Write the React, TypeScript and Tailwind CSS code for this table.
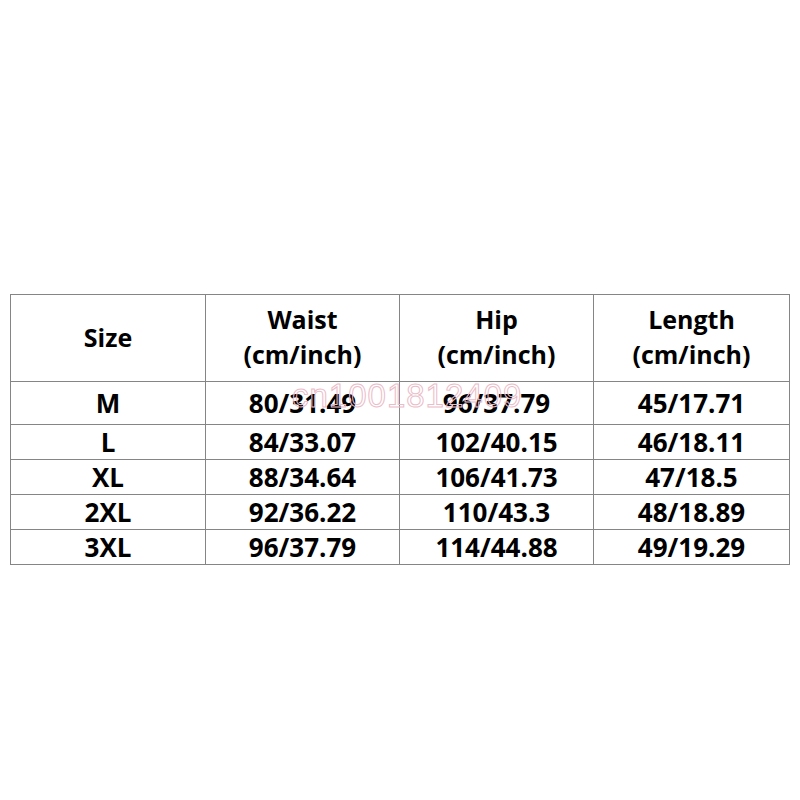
const headers = [
  ["Size"],
  ["Waist", "(cm/inch)"],
  ["Hip", "(cm/inch)"],
  ["Length", "(cm/inch)"],
]

const rows = [
  ["M", "80/31.49", "96/37.79", "45/17.71"],
  ["L", "84/33.07", "102/40.15", "46/18.11"],
  ["XL", "88/34.64", "106/41.73", "47/18.5"],
  ["2XL", "92/36.22", "110/43.3", "48/18.89"],
  ["3XL", "96/37.79", "114/44.88", "49/19.29"],
]

export default function App() {
  return (
    <div className="w-[800px] h-[800px] bg-white pt-[294px] pl-[10px] font-['Open_Sans',sans-serif] text-black">
      <div className="relative w-[779px]">
        <table className="w-[779px] table-fixed border-collapse">
          <colgroup>
            <col className="w-[195px]" />
            <col className="w-[194px]" />
            <col className="w-[194px]" />
            <col className="w-[196px]" />
          </colgroup>
          <thead>
            <tr className="h-[87px]">
              {headers.map((h, i) => (
                <th
                  key={i}
                  className="border border-[#858585] text-center align-middle font-bold text-[25px] leading-[35px] pb-[2px]"
                >
                  {h.map((line) => (
                    <div key={line}>{line}</div>
                  ))}
                </th>
              ))}
            </tr>
          </thead>
          <tbody>
            {rows.map((r, ri) => (
              <tr key={r[0]} className={ri === 0 ? "h-[43px]" : "h-[35px]"}>
                {r.map((c, ci) => (
                  <td
                    key={ci}
                    className="border border-[#858585] text-center align-middle font-bold text-[26px] leading-[30px] p-0"
                  >
                    {c}
                  </td>
                ))}
              </tr>
            ))}
          </tbody>
        </table>

        {/* watermark */}
        <div className="absolute left-[282px] top-[85px] text-[33px] leading-none font-['Liberation_Sans',sans-serif] font-light tracking-[1px] text-transparent [-webkit-text-stroke:1px_#ebbcc8] pointer-events-none">
          cn1001812409
        </div>
      </div>
    </div>
  )
}
